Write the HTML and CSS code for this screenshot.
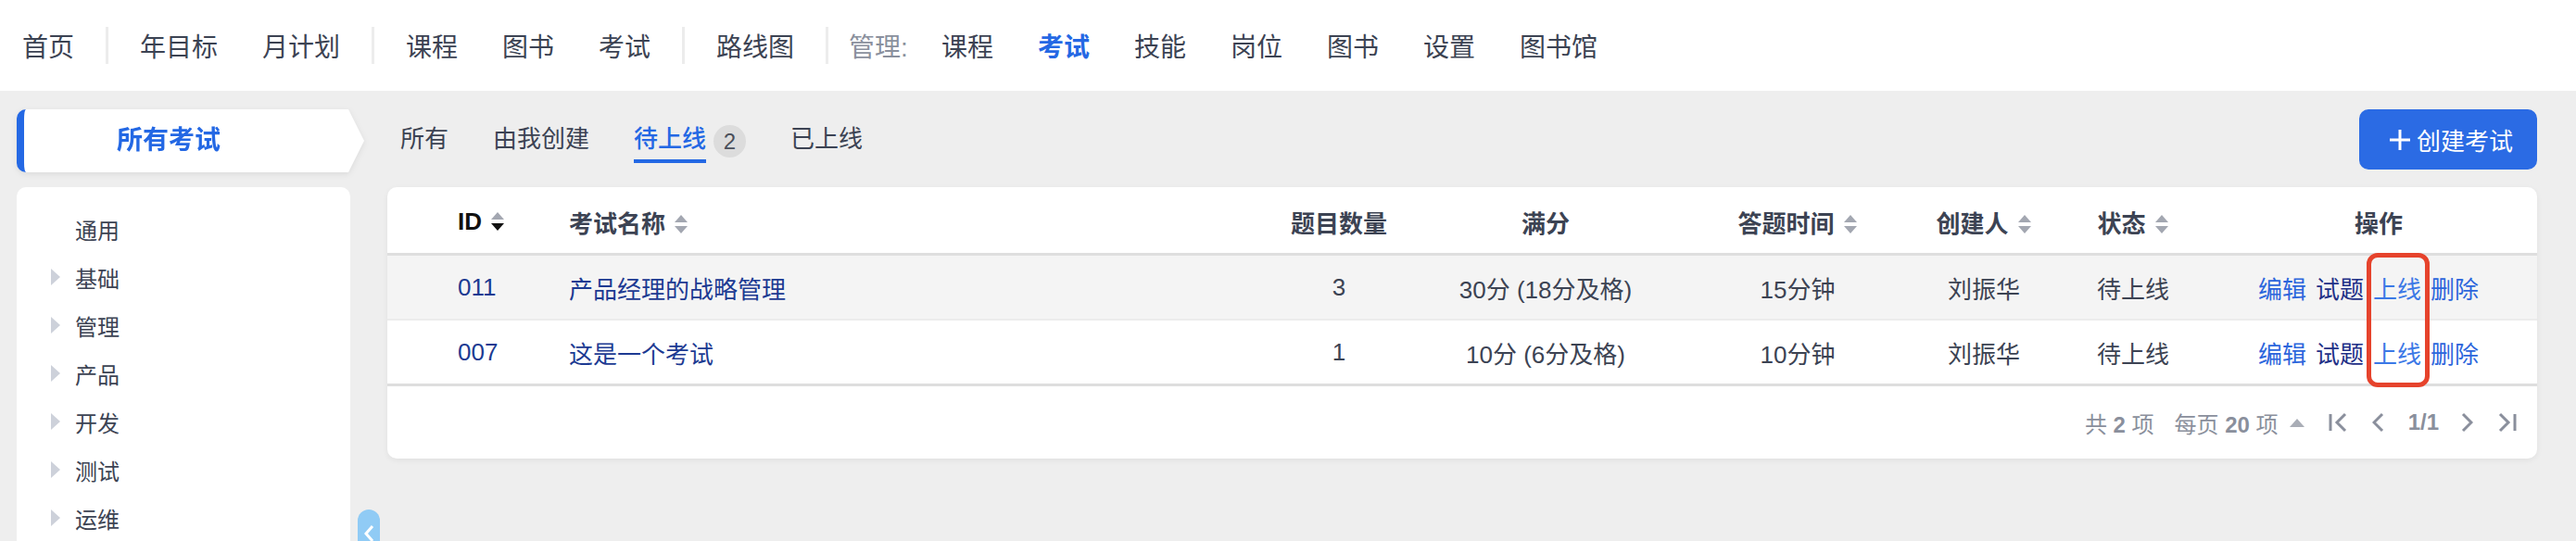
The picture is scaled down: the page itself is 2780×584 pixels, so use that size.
FILE: index.html
```html
<!DOCTYPE html>
<html lang="zh-CN">
<head>
    <meta charset="utf-8">
    <title>考试管理</title>
    <link rel="stylesheet" href="styles.css">
</head>
<body>
    <nav class="topnav">
        <a class="nav-item">首页</a>
        <span class="nav-sep"></span>
        <a class="nav-item">年目标</a>
        <a class="nav-item">月计划</a>
        <span class="nav-sep"></span>
        <a class="nav-item">课程</a>
        <a class="nav-item">图书</a>
        <a class="nav-item">考试</a>
        <span class="nav-sep"></span>
        <a class="nav-item">路线图</a>
        <span class="nav-sep"></span>
        <span class="nav-label">管理:</span>
        <a class="nav-item">课程</a>
        <a class="nav-item active">考试</a>
        <a class="nav-item">技能</a>
        <a class="nav-item">岗位</a>
        <a class="nav-item">图书</a>
        <a class="nav-item">设置</a>
        <a class="nav-item">图书馆</a>
    </nav>

    <div class="main">
        <aside class="side">
            <div class="side-tab-wrap">
                <div class="side-tab">所有考试</div>
            </div>
            <ul class="side-tree">
                <li class="leaf"><span class="caret"></span>通用</li>
                <li><span class="caret"></span>基础</li>
                <li><span class="caret"></span>管理</li>
                <li><span class="caret"></span>产品</li>
                <li><span class="caret"></span>开发</li>
                <li><span class="caret"></span>测试</li>
                <li><span class="caret"></span>运维</li>
            </ul>
        </aside>

        <!-- sidebar collapse handle -->
        <div class="collapse-btn">
            <svg width="12" height="20" viewBox="0 0 12 20"><polyline points="10,2 3,10 10,18" fill="none" stroke="#fff" stroke-width="3"/></svg>
        </div>

        <section class="content">
            <div class="toolbar">
                <div class="tabs">
                    <a class="tab">所有</a>
                    <a class="tab">由我创建</a>
                    <a class="tab active">待上线</a><span class="badge">2</span>
                    <a class="tab">已上线</a>
                </div>
                <button class="btn-create">
                    <svg width="24" height="24" viewBox="0 0 24 24"><path d="M12 1v22M1 12h22" stroke="#fff" stroke-width="3"/></svg>
                    创建考试
                </button>
            </div>

            <div class="card">
                <table class="exam-table">
                    <colgroup>
                        <col style="width:196px">
                        <col style="width:746px">
                        <col style="width:170px">
                        <col style="width:276px">
                        <col style="width:268px">
                        <col style="width:134px">
                        <col style="width:188px">
                        <col>
                    </colgroup>
                    <thead>
                        <tr>
                            <th class="col-id sorted">ID <svg class="sort" viewBox="0 0 16 24"><polygon points="1,10 8,2 15,10" fill="#a3a7b1"/><polygon points="1,14 15,14 8,22" fill="#111"/></svg></th>
                            <th class="left">考试名称 <svg class="sort" viewBox="0 0 16 24"><polygon points="1,10 8,2 15,10"/><polygon points="1,14 15,14 8,22"/></svg></th>
                            <th>题目数量</th>
                            <th>满分</th>
                            <th>答题时间 <svg class="sort" viewBox="0 0 16 24"><polygon points="1,10 8,2 15,10"/><polygon points="1,14 15,14 8,22"/></svg></th>
                            <th>创建人 <svg class="sort" viewBox="0 0 16 24"><polygon points="1,10 8,2 15,10"/><polygon points="1,14 15,14 8,22"/></svg></th>
                            <th>状态 <svg class="sort" viewBox="0 0 16 24"><polygon points="1,10 8,2 15,10"/><polygon points="1,14 15,14 8,22"/></svg></th>
                            <th>操作</th>
                        </tr>
                    </thead>
                    <tbody>
                        <tr class="hover">
                            <td class="col-id"><a class="link-dark">011</a></td>
                            <td class="left"><a class="link-dark">产品经理的战略管理</a></td>
                            <td>3</td>
                            <td>30分 (18分及格)</td>
                            <td>15分钟</td>
                            <td>刘振华</td>
                            <td>待上线</td>
                            <td class="ops"><a class="op">编辑</a><a class="op visited">试题</a><a class="op light">上线</a><a class="op">删除</a></td>
                        </tr>
                        <tr class="last">
                            <td class="col-id"><a class="link-dark">007</a></td>
                            <td class="left"><a class="link-dark">这是一个考试</a></td>
                            <td>1</td>
                            <td>10分 (6分及格)</td>
                            <td>10分钟</td>
                            <td>刘振华</td>
                            <td>待上线</td>
                            <td class="ops"><a class="op">编辑</a><a class="op visited">试题</a><a class="op light">上线</a><a class="op">删除</a></td>
                        </tr>
                    </tbody>
                </table>

                <div class="pager">
                    <span class="pg-total">共 <b>2</b> 项</span>
                    <span class="pg-size">每页 <b>20</b> 项</span>
                    <svg class="pg-up" width="16" height="10" viewBox="0 0 16 10"><polygon points="0,10 8,1 16,10" fill="#a9adb6"/></svg>
                    <svg class="pg-icon first" width="21" height="24" viewBox="0 0 21 24"><path d="M2 3v18M18 3l-9 9 9 9" fill="none" stroke="#8a8f9c" stroke-width="3"/></svg>
                    <svg class="pg-icon" width="13" height="24" viewBox="0 0 13 24"><path d="M11 3l-9 9 9 9" fill="none" stroke="#8a8f9c" stroke-width="3"/></svg>
                    <b class="pg-num">1/1</b>
                    <svg class="pg-icon" width="13" height="24" viewBox="0 0 13 24"><path d="M2 3l9 9-9 9" fill="none" stroke="#8a8f9c" stroke-width="3"/></svg>
                    <svg class="pg-icon last" width="21" height="24" viewBox="0 0 21 24"><path d="M3 3l9 9-9 9M19 3v18" fill="none" stroke="#8a8f9c" stroke-width="3"/></svg>
                </div>

                <!-- annotation box around the 上线 links -->
                <div class="mark"></div>
            </div>
        </section>
    </div>
</body>
</html>
```

FILE: styles.css
```css
html, body {
    margin: 0;
    padding: 0;
    height: 100%;
    overflow: hidden;
}
body {
    font-family: "Liberation Sans", "Noto Sans CJK SC", sans-serif;
    background-color: #eeeeee;
    color: #3c4353;
}
a {
    text-decoration: none;
    cursor: pointer;
}

/* top navigation */
.topnav {
    height: 98px;
    background-color: #fff;
    display: flex;
    align-items: center;
    font-size: 28px;
}
.nav-item {
    padding: 0 24px;
    color: #3c4353;
}
.nav-item.active {
    color: #2468e4;
    font-weight: bold;
}
.nav-sep {
    width: 3px;
    height: 40px;
    margin: 0 10px;
    background-color: #ececec;
}
.nav-label {
    padding: 0 12px;
    color: #8a909d;
}

/* page body */
.main {
    position: relative;
    display: flex;
    gap: 40px;
    padding: 20px 42px 0 18px;
}
.side {
    width: 360px;
    flex-shrink: 0;
}
.side-tab-wrap {
    width: 375px;
    filter: drop-shadow(0 2px 3px rgba(0, 0, 0, 0.08));
}
.side-tab {
    height: 68px;
    line-height: 68px;
    background-color: #fff;
    border-left: 8px solid #2468e4;
    border-radius: 10px 0 0 10px;
    padding-left: 100px;
    font-size: 28px;
    font-weight: bold;
    color: #2468e4;
    clip-path: polygon(0 0, calc(100% - 17px) 0, 100% 50%, calc(100% - 17px) 100%, 0 100%);
}
.side-tree {
    list-style: none;
    margin: 16px 0 0 0;
    padding: 19px 0 40px 37px;
    background-color: #fff;
    border-radius: 10px;
}
.side-tree li {
    display: flex;
    align-items: center;
    height: 52px;
    font-size: 24px;
    color: #3c4353;
}
.caret {
    width: 0;
    height: 0;
    margin-right: 16px;
    border-top: 9px solid transparent;
    border-bottom: 9px solid transparent;
    border-left: 10px solid #cdd1da;
}
.side-tree li.leaf .caret {
    border-left-color: transparent;
}
.collapse-btn {
    position: absolute;
    left: 386px;
    top: 452px;
    width: 24px;
    height: 64px;
    border-radius: 12px;
    background-color: #90cbf5;
    display: flex;
    justify-content: center;
    padding-top: 16px;
    box-sizing: border-box;
}

/* content column */
.content {
    flex: 1;
    min-width: 0;
}
.toolbar {
    height: 84px;
    display: flex;
    justify-content: space-between;
    align-items: flex-start;
}
.tabs {
    height: 65px;
    display: flex;
    align-items: center;
    padding-left: 14px;
    font-size: 26px;
}
.tab {
    position: relative;
    height: 65px;
    line-height: 65px;
    margin-right: 48px;
    color: #3c4353;
}
.tab.active {
    color: #2468e4;
    font-weight: 500;
    margin-right: 8px;
}
.tab.active::after {
    content: "";
    position: absolute;
    left: 0;
    right: 0;
    bottom: 7px;
    height: 4px;
    background-color: #2468e4;
}
.badge {
    width: 35px;
    height: 35px;
    line-height: 35px;
    margin: 3px 48px 0 0;
    border-radius: 50%;
    background-color: #dcdcdc;
    color: #4a4f5a;
    font-size: 24px;
    text-align: center;
}
.btn-create {
    width: 192px;
    height: 65px;
    display: flex;
    align-items: center;
    gap: 6px;
    padding: 0 0 0 32px;
    border: none;
    border-radius: 10px;
    background-color: #2b6be4;
    color: #fff;
    font-family: inherit;
    font-size: 26px;
}

/* table card */
.card {
    position: relative;
    background-color: #fff;
    border-radius: 10px;
    box-shadow: 0 2px 6px rgba(0, 0, 0, 0.06);
}
.exam-table {
    width: 100%;
    table-layout: fixed;
    border-collapse: separate;
    border-spacing: 0;
    font-size: 26px;
}
.exam-table th, .exam-table td {
    box-sizing: border-box;
    padding: 0;
    text-align: center;
    white-space: nowrap;
}
.exam-table th {
    height: 74px;
    padding-top: 4px;
    border-bottom: 3px solid #dedede;
    font-weight: bold;
    color: #3c4353;
}
.exam-table th.sorted {
    color: #111;
}
.exam-table td {
    height: 70px;
    border-bottom: 2px solid #ececec;
    color: #3c4353;
}
.exam-table tr.last td {
    height: 71px;
    border-bottom: 3px solid #dedede;
}
.exam-table tr.hover td {
    background-color: #f4f4f4;
}
.exam-table .col-id {
    text-align: left;
    padding-left: 76px;
}
.exam-table .left {
    text-align: left;
}
.sort {
    width: 16px;
    height: 24px;
    margin-left: 2px;
    vertical-align: -3px;
    fill: #a3a7b1;
}
.link-dark {
    color: #1c3a92;
}
.ops {
    padding-right: 22px !important;
}
.op {
    margin: 0 5px;
    color: #2c66dc;
}
.op.visited {
    color: #1f3087;
}
.op.light {
    color: #3b78e6;
}

/* pagination */
.pager {
    height: 78px;
    display: flex;
    justify-content: flex-end;
    align-items: center;
    padding-right: 22px;
    font-size: 24px;
    color: #8a8f9c;
}
.pg-total {
    margin-right: 22px;
}
.pg-size {
    margin-right: 12px;
}
.pg-up {
    margin-right: 26px;
}
.pg-icon {
    margin-right: 26px;
}
.pg-icon.last {
    margin-right: 0;
}
.pg-num {
    margin-right: 24px;
}

.mark {
    position: absolute;
    left: 2136px;
    top: 71px;
    width: 68px;
    height: 145px;
    box-sizing: border-box;
    border: 5px solid #e6432c;
    border-radius: 12px;
}
```
